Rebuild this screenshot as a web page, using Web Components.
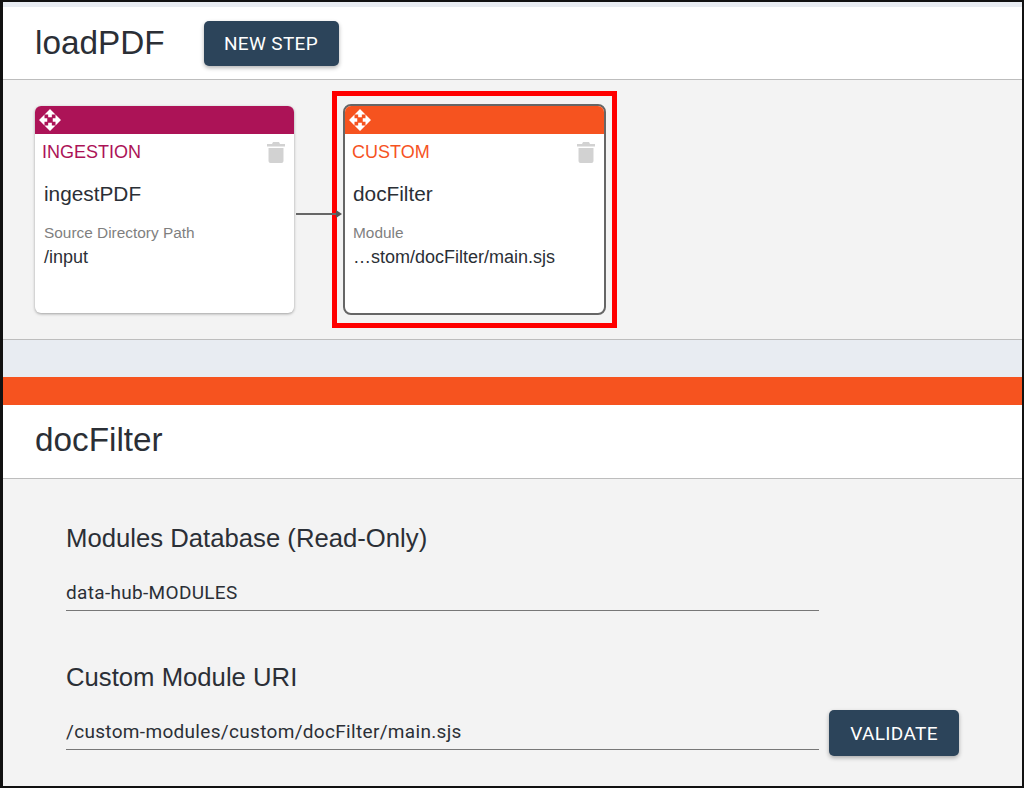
<!DOCTYPE html>
<html>
<head>
<meta charset="utf-8">
<style>
  html, body { margin: 0; padding: 0; height: 100%; }
  body { background: #f3f3f3; font-family: "Liberation Sans", Arial, sans-serif; overflow: hidden; }
</style>
</head>
<body>
<flow-page>
  <page-header title-text="loadPDF"><flat-button>NEW STEP</flat-button></page-header>
  <flow-canvas>
    <step-card kind="INGESTION" color="#ac1357" name="ingestPDF" label="Source Directory Path" value="/input"></step-card>
    <step-arrow></step-arrow>
    <step-card selected kind="CUSTOM" color="#f6531f" name="docFilter" label="Module" value="…stom/docFilter/main.sjs"></step-card>
  </flow-canvas>
  <page-gap></page-gap>
  <page-header title-text="docFilter" bar></page-header>
  <step-form>
    <form-field label="Modules Database (Read-Only)" value="data-hub-MODULES"></form-field>
    <form-field label="Custom Module URI" value="/custom-modules/custom/docFilter/main.sjs"><flat-button slot="action" small>VALIDATE</flat-button></form-field>
  </step-form>
</flow-page>
<script>
  class FlowPage extends HTMLElement {
    constructor() {
      super();
      this.attachShadow({ mode: 'open' }).innerHTML = `
        <style>
          :host {
            display: flex; flex-direction: column; box-sizing: border-box;
            width: 1024px; height: 788px; overflow: hidden;
            border: solid #111; border-width: 2px 2px 2px 3px;
            background: #f3f3f3; color: #2b2f36;
          }
        </style>
        <slot></slot>`;
    }
  }

  class PageHeader extends HTMLElement {
    constructor() {
      super();
      const bar = this.hasAttribute('bar');
      this.attachShadow({ mode: 'open' }).innerHTML = `
        <style>
          :host { display: block; flex: none; }
          .top { height: 5px; background: #e8ecf2; }
          .bar { height: 28px; background: #f6531f; }
          .row {
            display: flex; align-items: center; gap: 39px; box-sizing: border-box;
            height: ${bar ? 74 : 73}px; padding: 0 0 ${bar ? 3 : 1}px 32px;
            background: #fff; border-bottom: 1px solid #bdbdbd;
          }
          h1 { margin: 0; font-size: 33.300px; font-weight: 400; line-height: 1; }
        </style>
        ${bar ? '<div class="bar"></div>' : '<div class="top"></div>'}
        <div class="row"><h1></h1><slot></slot></div>`;
      this.shadowRoot.querySelector('h1').textContent = this.getAttribute('title-text');
    }
  }

  class FlatButton extends HTMLElement {
    constructor() {
      super();
      this.attachShadow({ mode: 'open' }).innerHTML = `
        <style>
          :host {
            display: inline-flex; align-items: center; justify-content: center;
            box-sizing: border-box; flex: none; width: 135px; height: 45px; margin-top: 2px;
            background: #2c445a; color: #fff; border-radius: 5px;
            font: 400 19px Roboto, sans-serif; letter-spacing: .35px;
            box-shadow: 0 2px 4px rgba(0,0,0,.3);
          }
          :host([small]) { width: 130px; height: 46px; margin-top: 0; }
        </style>
        <slot></slot>`;
    }
  }

  class FlowCanvas extends HTMLElement {
    constructor() {
      super();
      this.attachShadow({ mode: 'open' }).innerHTML = `
        <style>
          :host {
            display: flex; flex: none; position: relative; align-items: flex-start; box-sizing: border-box;
            height: 260px; padding: 26px 0 0 32px;
            border-bottom: 1px solid #bdbdbd; background: #f3f3f3;
          }
        </style>
        <slot></slot>`;
    }
  }

  const MOVE_ICON = `<svg width="22" height="22" viewBox="0 0 24 24" fill="#fff">
    <path d="M12 0l6 6h-4v3h-4V6H6zM12 24l-6-6h4v-3h4v3h4zM0 12l6-6v4h3v4H6v4zM24 12l-6 6v-4h-3v-4h3V6z"/></svg>`;
  const TRASH_ICON = `<svg width="18" height="21" viewBox="0 0 18 21">
    <path fill="#d2d2d2" d="M6 0h6l1 2h5v2.500H0V2h5zM1.500 6h15v13a2 2 0 0 1-2 2h-11a2 2 0 0 1-2-2z"/></svg>`;

  class StepCard extends HTMLElement {
    constructor() {
      super();
      const color = this.getAttribute('color');
      this.attachShadow({ mode: 'open' }).innerHTML = `
        <style>
          :host { display: block; flex: none; --text-left: 9px; }
          :host([selected]) {
            box-sizing: border-box; width: 285px; height: 237px;
            margin: -15px 0 0 0; padding: 8px 6px;
            border: 5px solid #f00; --text-left: 8px;
          }
          .card {
            box-sizing: border-box; width: 259px; height: 207px; overflow: hidden;
            background: #fff; border-radius: 6px;
            box-shadow: 0 1px 3px rgba(0,0,0,.35);
          }
          :host([selected]) .card { width: 263px; height: 211px; border: 2px solid #666; border-radius: 8px; box-shadow: none; }
          .head { display: flex; align-items: center; height: 28px; padding-left: 4px; background: ${color}; }
          .head svg { display: block; }
          .kind {
            display: flex; justify-content: space-between; align-items: flex-start;
            padding: 8px 9px 0 7px; font-size: 18px; line-height: 21px; color: ${color};
          }
          .name { margin: 19px 0 0 var(--text-left); font-size: 20.800px; line-height: 24px; }
          .label { margin: 18px 0 0 var(--text-left); font-size: 15.400px; line-height: 17px; color: #7f7f7f; }
          .value { margin: 7px 0 0 var(--text-left); font-size: 18px; line-height: 19px; }
        </style>
        <div class="card">
          <div class="head">${MOVE_ICON}</div>
          <div class="kind"><span>${this.getAttribute('kind')}</span>${TRASH_ICON}</div>
          <div class="name">${this.getAttribute('name')}</div>
          <div class="label">${this.getAttribute('label')}</div>
          <div class="value">${this.getAttribute('value')}</div>
        </div>`;
    }
  }

  class StepArrow extends HTMLElement {
    constructor() {
      super();
      this.attachShadow({ mode: 'open' }).innerHTML = `
        <style>
          :host { display: block; flex: none; width: 38px; position: relative; }
          svg { position: absolute; left: 2px; top: 102px; display: block; }
        </style>
        <svg width="48" height="12" viewBox="0 0 48 12">
          <path d="M0 6h41" stroke="#666" stroke-width="2"/><path d="M40 2l6 4-6 4z" fill="#555"/>
        </svg>`;
    }
  }

  class PageGap extends HTMLElement {
    constructor() {
      super();
      this.attachShadow({ mode: 'open' }).innerHTML = `
        <style>:host { display: block; flex: none; height: 37px; background: #e8ecf2; }</style>`;
    }
  }

  class StepForm extends HTMLElement {
    constructor() {
      super();
      this.attachShadow({ mode: 'open' }).innerHTML = `
        <style>
          :host { display: flex; flex-direction: column; gap: 52px; flex: 1; padding: 45px 0 0 63px; background: #f3f3f3; }
        </style>
        <slot></slot>`;
    }
  }

  class FormField extends HTMLElement {
    constructor() {
      super();
      this.attachShadow({ mode: 'open' }).innerHTML = `
        <style>
          :host { display: block; }
          .label { font-size: 25.700px; line-height: 28px; }
          .row { display: flex; align-items: flex-end; gap: 10px; height: 46px; margin-top: 13px; }
          .input {
            box-sizing: border-box; width: 753px; height: 36px;
            border-bottom: 1px solid #777;
            font: 400 19px/36px Roboto, sans-serif; letter-spacing: .32px;
          }
          .action { margin-bottom: -6px; }
        </style>
        <div class="label">${this.getAttribute('label')}</div>
        <div class="row">
          <div class="input">${this.getAttribute('value')}</div>
          <div class="action"><slot name="action"></slot></div>
        </div>`;
    }
  }

  customElements.define('flow-page', FlowPage);
  customElements.define('page-header', PageHeader);
  customElements.define('flat-button', FlatButton);
  customElements.define('flow-canvas', FlowCanvas);
  customElements.define('step-card', StepCard);
  customElements.define('step-arrow', StepArrow);
  customElements.define('page-gap', PageGap);
  customElements.define('step-form', StepForm);
  customElements.define('form-field', FormField);
</script>
</body>
</html>
